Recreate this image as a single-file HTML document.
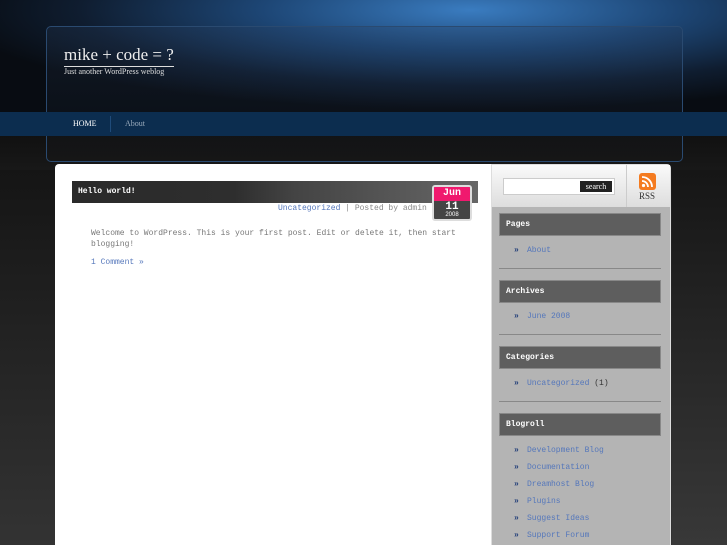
<!DOCTYPE html>
<html><head><meta charset="utf-8"><style>
*{margin:0;padding:0;box-sizing:border-box}
body{width:727px;height:545px;overflow:hidden;position:relative;background:#1c1c1c;font-family:"Liberation Mono",monospace;}
.hdr{position:absolute;left:0;top:0;width:727px;height:112px;background:radial-gradient(ellipse 520px 100px at 470px 10px,#3a7cc0 0%,#1d4675 40%,#0f1d30 75%,#080c12 100%);}
.hbox{position:absolute;left:46px;top:26px;width:637px;height:136px;border:1px solid #2a4a70;border-radius:5px;background:linear-gradient(180deg,rgba(40,60,90,.25),rgba(20,20,25,.1));}
.title{position:absolute;left:64px;top:45px;font-family:"Liberation Serif",serif;color:#eee;font-size:17px;border-bottom:1px solid #ddd;padding-bottom:1px}
.tag{position:absolute;left:64px;top:67px;font-family:"Liberation Serif",serif;color:#ddd;font-size:8px}
.nav{position:absolute;left:0;top:112px;width:727px;height:24px;background:#0c2d4f;}
.nav span{position:absolute;top:7px;font-family:"Liberation Serif",serif;font-size:8px}
.lower{position:absolute;left:0;top:136px;width:727px;height:409px;background:linear-gradient(180deg,#111 0%,#222 20%,#2a2a2a 60%,#333 100%)}
.main{position:absolute;left:55px;top:164px;width:436px;height:381px;background:#fff;border-radius:4px 0 0 0}
.ptitle{position:absolute;left:72px;top:181px;width:406px;height:22px;background:linear-gradient(90deg,#2a2a2a 0%,#2e2e2e 40%,#444 55%,#666 100%);color:#fff;font-size:8px;font-weight:bold;padding:6px 6px}
.meta{position:absolute;left:278px;top:204px;font-size:8px;color:#888}
.date{position:absolute;left:432px;top:185px;width:40px;height:36px;border:2px solid #ddd;border-radius:3px;background:#444;text-align:center;color:#fff;overflow:hidden}
.date .m{background:#f0196e;height:14px;font-size:10px;font-weight:bold;line-height:14px}
.date .d{font-size:11px;font-weight:bold;line-height:10px;margin-top:1px}
.date .y{font-size:6px;font-family:"Liberation Sans",sans-serif}
.body{position:absolute;left:91px;top:228px;font-size:8px;color:#777;line-height:11px;width:385px}
a{color:#5577bb;text-decoration:none}
.side{position:absolute;left:491px;top:164px;width:180px;height:381px;background:#b4b4b4;border-radius:0 4px 0 0;border:1px solid #ddd;border-bottom:none}
.stop{position:absolute;left:0;top:0;width:178px;height:42px;background:linear-gradient(180deg,#fafafa,#ddd)}
.search{position:absolute;left:11px;top:13px;width:112px;height:17px;background:#fff;border:1px solid #ccc}
.search b{position:absolute;right:2px;top:2px;width:32px;height:11px;background:#222;color:#fff;font-family:"Liberation Serif",serif;font-size:8px;font-weight:normal;text-align:center;line-height:11px}
.rss{position:absolute;left:134px;top:0;width:44px;height:42px;border-left:1px solid #ccc}
.rss svg{position:absolute;left:12px;top:8px}
.rss span{position:absolute;left:12px;top:26px;font-family:"Liberation Serif",serif;font-size:9px;color:#333}
.wh{position:absolute;left:7px;width:162px;height:23px;background:#5e5e5e;color:#fff;font-size:8px;font-weight:bold;padding:6px 6px;border:1px solid #888}
.sep{position:absolute;left:7px;width:162px;height:1px;background:#888}
.li{position:absolute;left:35px;font-size:8px;color:#5577bb}
.li:before{content:"»";position:absolute;left:-13px;color:#1f3c78;font-weight:bold}
.bx{position:absolute;background:#2a2a2a}
</style></head><body>
<div class="hdr"></div>
<div class="lower"></div>
<div class="bx" style="left:0;top:170px;width:55px;height:375px;background:linear-gradient(180deg,#151515,#333)"></div>
<div class="bx" style="left:672px;top:170px;width:55px;height:375px;background:linear-gradient(180deg,#161616,#383838)"></div>
<div class="hbox"></div>
<div class="nav"><span style="left:73px;color:#fff">HOME</span><span style="left:110px;top:4px;width:1px;height:16px;background:#1f4b7a"></span><span style="left:125px;color:#9ab">About</span></div>
<div class="title">mike + code = ?</div>
<div class="tag">Just another WordPress weblog</div>
<div class="main"></div>
<div class="ptitle">Hello world!</div>
<div class="meta"><a>Uncategorized</a> | Posted by admin</div>
<div class="date"><div class="m">Jun</div><div class="d">11</div><div class="y">2008</div></div>
<div class="body">Welcome to WordPress. This is your first post. Edit or delete it, then start blogging!<br><div style="margin-top:7px"><a>1 Comment »</a></div></div>
<div class="side">
<div class="stop"><div class="search"><b>search</b></div><div class="rss"><svg width="17" height="17" viewBox="0 0 17 17"><rect width="17" height="17" rx="3" fill="#f47b20"/><circle cx="4.5" cy="12.5" r="1.6" fill="#fff"/><path d="M3 8a6 6 0 0 1 6 6M3 4a10 10 0 0 1 10 10" stroke="#fff" stroke-width="1.8" fill="none"/></svg><span>RSS</span></div></div>
<div class="wh" style="top:48px">Pages</div><div class="li" style="top:81px">About</div><div class="sep" style="top:103px"></div>
<div class="wh" style="top:115px">Archives</div><div class="li" style="top:147px">June 2008</div><div class="sep" style="top:169px"></div>
<div class="wh" style="top:181px">Categories</div><div class="li" style="top:214px">Uncategorized <span style="color:#333">(1)</span></div><div class="sep" style="top:236px"></div>
<div class="wh" style="top:248px">Blogroll</div>
<div class="li" style="top:281px">Development Blog</div>
<div class="li" style="top:298px">Documentation</div>
<div class="li" style="top:315px">Dreamhost Blog</div>
<div class="li" style="top:332px">Plugins</div>
<div class="li" style="top:349px">Suggest Ideas</div>
<div class="li" style="top:366px">Support Forum</div>
</div>
</body></html>
